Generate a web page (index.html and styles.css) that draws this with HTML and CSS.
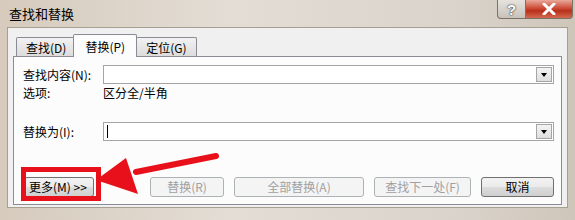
FILE: index.html
```html
<!DOCTYPE html>
<html>
<head>
    <meta charset="UTF-8">
    <title>查找和替换</title>
    <link rel="stylesheet" href="styles.css">
</head>
<body>
    <div class="frame">
        <div class="titlebar">
            <span class="title">查找和替换</span>
            <div class="caption-btns">
                <div class="cap help">?</div>
                <div class="cap close">
                    <svg width="14" height="12" viewBox="0 0 14 12"><path d="M2 1 L12 11 M12 1 L2 11" stroke="#fff" stroke-width="3" stroke-linecap="round"/></svg>
                </div>
            </div>
        </div>
        <div class="client">
            <div class="tabs">
                <div class="tab">查找(<u>D</u>)</div>
                <div class="tab active">替换(<u>P</u>)</div>
                <div class="tab">定位(<u>G</u>)</div>
            </div>
            <div class="panel">
                <div class="row">
                    <span class="label">查找内容(<u>N</u>):</span>
                    <div class="combo"><span class="drop"></span></div>
                </div>
                <div class="row opts">
                    <span class="label">选项:</span>
                    <span>区分全/半角</span>
                </div>
                <div class="row replace">
                    <span class="label">替换为(<u>I</u>):</span>
                    <div class="combo"><span class="caret"></span><span class="drop"></span></div>
                </div>
                <div class="buttons">
                    <button class="btn more">更多(<u>M</u>) &gt;&gt;</button>
                    <div class="spacer"></div>
                    <button class="btn off w74">替换(R)</button>
                    <button class="btn off w130">全部替换(A)</button>
                    <button class="btn off w97">查找下一处(F)</button>
                    <button class="btn w73">取消</button>
                </div>
            </div>
        </div>
    </div>

    <!-- red highlight and arrow -->
    <div class="mark-box"></div>
    <svg class="arrow" width="130" height="60" viewBox="0 0 130 60">
        <path d="M120 8 L40 24" stroke="#e8101a" stroke-width="6" stroke-linecap="round"/>
        <polygon points="0,32 30,10 42,46" fill="#e8101a"/>
    </svg>
</body>
</html>
```

FILE: styles.css
```css
body {
    margin: 0;
    width: 575px;
    height: 220px;
    overflow: hidden;
    position: relative;
    font-family: "Noto Sans CJK SC", "Liberation Sans", sans-serif;
    font-size: 12px;
    color: #000;
}
.frame {
    height: 220px;
    box-sizing: border-box;
    padding: 0 7px 12px 7px;
    background: linear-gradient(90deg, #d6cbbd 0%, #e3ddd5 40%, #d9d3cb 80%, #cfc6ba 100%);
}
.titlebar {
    height: 27px;
    display: flex;
    justify-content: space-between;
    align-items: flex-start;
    margin: 0 -7px;
}
.title {
    font-size: 13px;
    padding: 4px 0 0 9px;
}
.caption-btns {
    display: flex;
    margin-right: 2px;
}
.cap {
    height: 19px;
    box-sizing: border-box;
    border: 1px solid #7a7266;
    border-top: none;
    display: flex;
    align-items: center;
    justify-content: center;
}
.help {
    width: 29px;
    border-radius: 0 0 0 4px;
    background: linear-gradient(#e6e2dd, #c8c2ba);
    color: #fff;
    font: bold 15px "Liberation Sans", sans-serif;
    text-shadow: 0 0 2px #333, 0 0 1px #333;
}
.close {
    width: 47px;
    border-left: none;
    border-radius: 0 0 4px 0;
    background: linear-gradient(#e9a89a, #c9432d 50%, #b8301c 60%, #d36a4f);
}
.client {
    height: 181px;
    background: #f0f0f0;
    border: 1px solid #a89f93;
    box-sizing: border-box;
    padding: 5px 5px 0 5px;
}
.tabs {
    display: flex;
    padding-left: 3px;
    height: 23px;
    align-items: flex-end;
    position: relative;
    z-index: 1;
}
.tab {
    height: 19px;
    box-sizing: border-box;
    border: 1px solid #898c95;
    border-bottom: none;
    background: linear-gradient(#f2f2f2, #dcdcdc);
    padding: 2px 9px 0 9px;
    margin-right: -1px;
    line-height: 16px;
    border-radius: 2px 2px 0 0;
}
.tab.active {
    height: 23px;
    background: #fcfcfc;
    padding-top: 4px;
    margin: 0 -1px 0 -2px;
    padding-left: 11px;
    padding-right: 11px;
    position: relative;
    top: 1px;
}
u {
    text-decoration: none;
}
.panel {
    height: 149px;
    box-sizing: border-box;
    background: #fcfcfc;
    border: 1px solid #898c95;
    padding: 8px 7px 0 9px;
    display: flex;
    flex-direction: column;
}
.row {
    display: flex;
    align-items: center;
    height: 19px;
}
.label {
    width: 80px;
}
.combo {
    flex: 1;
    height: 19px;
    box-sizing: border-box;
    border: 1px solid #a5a5a5;
    background: #fff;
    position: relative;
    display: flex;
    justify-content: flex-end;
    align-items: center;
    padding-right: 1px;
}
.drop {
    width: 16px;
    height: 15px;
    box-sizing: border-box;
    border: 1px solid #a5a5a5;
    background: linear-gradient(#f4f4f4, #dedede);
    position: relative;
}
.drop::after {
    content: "";
    position: absolute;
    left: 4px;
    top: 5px;
    border-left: 3.5px solid transparent;
    border-right: 3.5px solid transparent;
    border-top: 4px solid #000;
}
.caret {
    position: absolute;
    left: 3px;
    top: 2px;
    width: 1px;
    height: 13px;
    background: #000;
}
.opts {
    height: 17px;
}
.replace {
    margin-top: 21px;
}
.buttons {
    display: flex;
    margin-top: 36px;
    gap: 10px;
    padding-left: 1px;
}
.spacer {
    flex: 1;
}
.btn {
    height: 20px;
    box-sizing: border-box;
    border: 1px solid #707070;
    border-radius: 3px;
    background: linear-gradient(#f2f2f2 0%, #ebebeb 50%, #dddddd 51%, #cfcfcf 100%);
    font-family: "Noto Sans CJK SC", "Liberation Sans", sans-serif;
    font-size: 12px;
    color: #000;
    padding: 0;
    line-height: 16px;
}
.more {
    width: 70px;
    text-align: left;
    padding-left: 4px;
}
.btn.off {
    border-color: #adb2b5;
    background: #f4f4f4;
    color: #a0a0a0;
}
.w73 { width: 73px; }
.w74 { width: 74px; }
.w130 { width: 130px; }
.w97 { width: 97px; }
.mark-box {
    position: absolute;
    left: 21px;
    top: 167px;
    width: 70px;
    height: 24px;
    border: 5px solid #e8101a;
}
.arrow {
    position: absolute;
    left: 96px;
    top: 148px;
}
```
